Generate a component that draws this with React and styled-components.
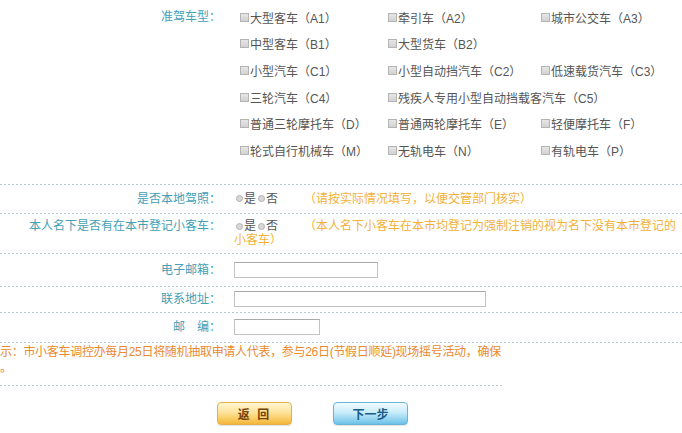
import React from "react";
import styled, { createGlobalStyle } from "styled-components";

const Global = createGlobalStyle`
  html, body { margin: 0; padding: 0; background: #fff; }
  body { font-family: "Liberation Sans", "Noto Sans CJK SC", sans-serif; font-size: 12px; }
`;

const dash = `repeating-linear-gradient(to right, #b7c6cd 0 2px, transparent 2px 4px)`;

const Page = styled.div`
  width: 682px;
  height: 433px;
  overflow: hidden;
  background: #fff;
  color: #555;
`;

const TypeSection = styled.div`
  display: grid;
  grid-template-columns: 221px 1fr;
  column-gap: 19px;
  padding-top: 4px;
  height: 180px;
`;

const Label = styled.div`
  text-align: right;
  color: #43a0b5;
  line-height: ${(p) => p.$lh || "26.6px"};
  white-space: nowrap;
`;

const OptionGrid = styled.div`
  display: grid;
  grid-template-columns: 148px 153px auto;
  grid-auto-rows: 26.6px;
  align-items: center;
`;

const Option = styled.div`
  display: flex;
  align-items: center;
  white-space: nowrap;
  color: #555;
  grid-column: ${(p) => p.$span || "auto"};
`;

const Check = styled.span`
  display: inline-block;
  width: 7px;
  height: 7px;
  border: 1px solid #b4b4b4;
  background: linear-gradient(#e6e6e6, #d2d2d2);
  margin-right: 1px;
  flex: none;
`;

const Row = styled.div`
  display: grid;
  grid-template-columns: 221px 1fr;
  column-gap: 13px;
  align-items: ${(p) => p.$align || "center"};
  height: ${(p) => p.$h}px;
  box-sizing: border-box;
  padding-top: ${(p) => p.$pt || 0}px;
  background: ${dash} top left / 100% 1px no-repeat;
`;

const Value = styled.div`
  line-height: ${(p) => p.$lh || "16px"};
  color: #555;
  padding-right: 6px;
  white-space: nowrap;
`;

const Radio = styled.span`
  display: inline-block;
  width: 5px;
  height: 5px;
  border-radius: 50%;
  border: 1px solid #b3b3b3;
  background: #d8d8d8;
  margin: 0 1px 1px 2px;
  vertical-align: middle;
`;

const Note = styled.span`
  color: #f3b13a;
  margin-left: ${(p) => (p.$cont ? 0 : 26)}px;
`;

const TextInput = styled.div`
  width: ${(p) => p.$w}px;
  height: 16px;
  box-sizing: border-box;
  border: 1px solid #c3c3c3;
  border-top-color: #a9a9a9;
  background: #fff;
`;

const TipSection = styled.div`
  background: ${dash} top left / 100% 1px no-repeat;
  padding-top: 1px;
`;

const Tip = styled.div`
  width: 502px;
  color: #ea8a2e;
  line-height: 16px;
  letter-spacing: -0.3px;
  padding: 1px 0 10px;
  white-space: nowrap;
  background: ${dash} bottom left / 100% 1px no-repeat;
`;

const Buttons = styled.div`
  display: flex;
  gap: 41px;
  padding: 16px 0 0 217px;
`;

const Button = styled.div`
  width: 75px;
  height: 23px;
  box-sizing: border-box;
  border-radius: 4px;
  display: flex;
  align-items: center;
  justify-content: center;
  font-weight: bold;
  font-size: 12px;
  letter-spacing: ${(p) => p.$ls || 0};
  color: ${(p) => (p.$kind === "blue" ? "#1b5c88" : "#7a4208")};
  border: 1px solid ${(p) => (p.$kind === "blue" ? "#66b6da" : "#e3b04c")};
  background: ${(p) =>
    p.$kind === "blue"
      ? "linear-gradient(#f2fbff, #c9ecfa 45%, #8fd2ef 80%, #6cc1e6)"
      : "linear-gradient(#fff6d2, #fde39a 45%, #f8c95a 80%, #f3b63b)"};
  box-shadow: 0 1px 1px rgba(0,0,0,0.12);
`;

const options = [
  ["大型客车（A1）"], ["牵引车（A2）"], ["城市公交车（A3）"],
  ["中型客车（B1）"], ["大型货车（B2）"], [null],
  ["小型汽车（C1）"], ["小型自动挡汽车（C2）"], ["低速载货汽车（C3）"],
  ["三轮汽车（C4）"], ["残疾人专用小型自动挡载客汽车（C5）", "2 / span 2"], [undefined],
  ["普通三轮摩托车（D）"], ["普通两轮摩托车（E）"], ["轻便摩托车（F）"],
  ["轮式自行机械车（M）"], ["无轨电车（N）"], ["有轨电车（P）"],
];

export default function App() {
  return (
    <Page>
      <Global />
      <TypeSection>
        <Label>准驾车型：</Label>
        <OptionGrid>
          {options.map(([t, span], i) =>
            t === undefined ? null : t === null ? (
              <div key={i} />
            ) : (
              <Option key={i} $span={span}>
                <Check />
                {t}
              </Option>
            )
          )}
        </OptionGrid>
      </TypeSection>

      <Row $h={29}>
        <Label $lh="16px">是否本地驾照：</Label>
        <Value>
          <Radio />是<Radio />否
          <Note>（请按实际情况填写，以便交管部门核实）</Note>
        </Value>
      </Row>

      <Row $h={40} $align="start" $pt={6}>
        <Label $lh="14px">本人名下是否有在本市登记小客车：</Label>
        <Value $lh="14px">
          <Radio />是<Radio />否
          <Note>（本人名下小客车在本市均登记为强制注销的视为名下没有本市登记的</Note>
          <br />
          <Note $cont>小客车）</Note>
        </Value>
      </Row>

      <Row $h={33}>
        <Label $lh="16px">电子邮箱：</Label>
        <Value>
          <TextInput $w={144} />
        </Value>
      </Row>

      <Row $h={26}>
        <Label $lh="16px">联系地址：</Label>
        <Value>
          <TextInput $w={252} />
        </Value>
      </Row>

      <Row $h={30}>
        <Label $lh="16px">邮　编：</Label>
        <Value>
          <TextInput $w={86} />
        </Value>
      </Row>

      <TipSection>
        <Tip>
          示：市小客车调控办每月25日将随机抽取申请人代表，参与26日(节假日顺延)现场摇号活动，确保
          <br />。
        </Tip>
      </TipSection>

      <Buttons>
        <Button $ls="2px">返 回</Button>
        <Button $kind="blue">下一步</Button>
      </Buttons>
    </Page>
  );
}
